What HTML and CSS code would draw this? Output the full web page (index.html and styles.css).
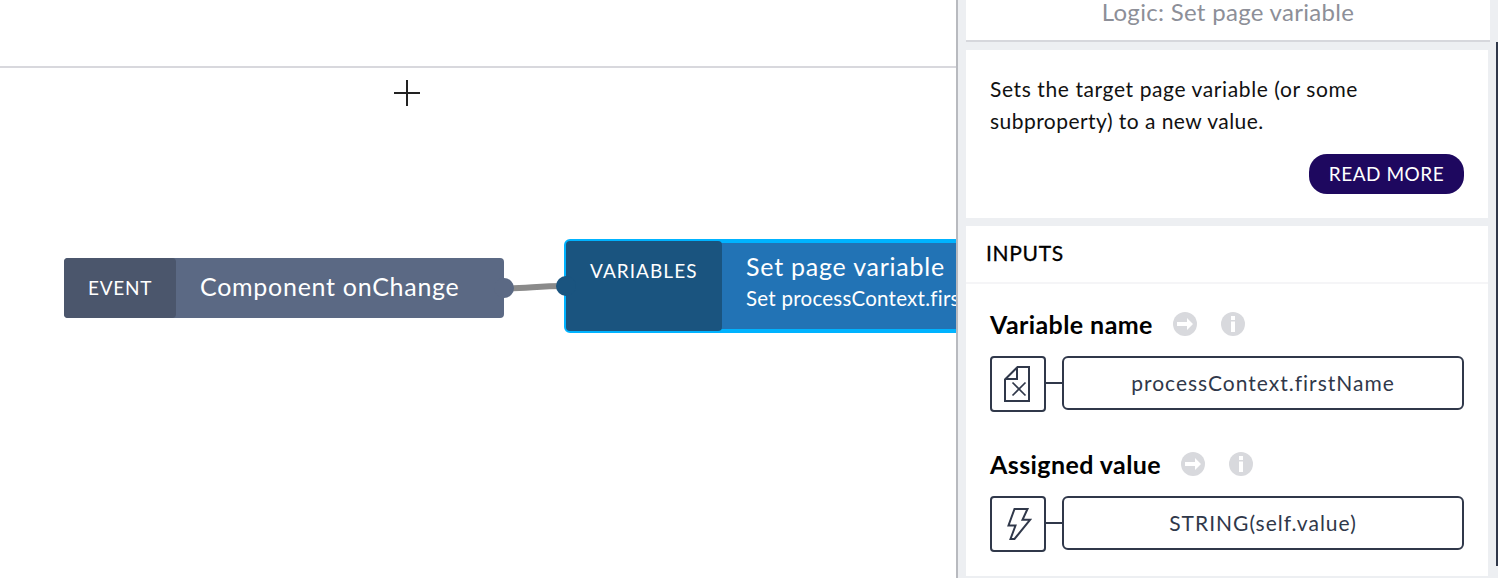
FILE: index.html
```html
<!DOCTYPE html>
<html lang="en">
<head>
<meta charset="utf-8">
<title>Logic editor</title>
<link rel="stylesheet" href="styles.css">
</head>
<body>
<div class="app">
  <main class="canvas">
    <div class="toolbar"></div>
    <svg class="cursor" width="26" height="26" viewBox="0 0 26 26"><path d="M13 0V26M0 13H26"/></svg>
    <svg class="wire" width="64" height="20" viewBox="0 0 64 20"><path d="M4 10.500C26 10.500 36 8 62 8"/></svg>
    <div class="node event">
      <span class="kind"><span class="t-event">EVENT</span></span>
      <span class="title t-comp">Component onChange</span>
      <i class="port port-out"></i>
    </div>
    <div class="node variables">
      <span class="kind"><span class="t-vars">VARIABLES</span></span>
      <span class="info">
        <span class="title t-set">Set page variable</span>
        <span class="sub">Set processContext.firstName</span>
      </span>
      <i class="port port-in"></i>
    </div>
  </main>
  <aside class="panel">
    <header class="panel-head"><span class="t-logic">Logic: Set page variable</span></header>
    <section class="card about">
      <p class="desc"><span class="t-d1">Sets the target page variable (or some</span><br><span class="t-d2">subproperty) to a new value.</span></p>
      <button class="more"><span class="t-more">READ MORE</span></button>
    </section>
    <section class="card inputs">
      <h2 class="inputs-head"><span class="t-inputs">INPUTS</span></h2>
      <div class="field">
        <div class="label"><span>Variable name</span>
          <svg class="hint" width="24" height="24" viewBox="0 0 24 24"><circle cx="12" cy="12" r="12"/><path d="M4 10H14V6L20 12L14 18V14H4Z"/></svg>
          <svg class="hint" width="24" height="24" viewBox="0 0 24 24"><circle cx="12" cy="12" r="12"/><path d="M10 4H14V8H10ZM10 9.500H14V20H10Z"/></svg>
        </div>
        <div class="binding">
          <span class="type"><svg width="28" height="36" viewBox="0 0 28 36"><path d="M13.500 1H25V35H1V13.500ZM13 1.500V13H1.500"/><path class="thin" d="M8.500 16.500L21.500 29.500M21.500 16.500L8.500 29.500"/></svg></span>
          <i class="link"></i>
          <span class="value"><span class="t-pc">processContext.firstName</span></span>
        </div>
      </div>
      <div class="field">
        <div class="label"><span>Assigned value</span>
          <svg class="hint" width="24" height="24" viewBox="0 0 24 24"><circle cx="12" cy="12" r="12"/><path d="M4 10H14V6L20 12L14 18V14H4Z"/></svg>
          <svg class="hint" width="24" height="24" viewBox="0 0 24 24"><circle cx="12" cy="12" r="12"/><path d="M10 4H14V8H10ZM10 9.500H14V20H10Z"/></svg>
        </div>
        <div class="binding">
          <span class="type"><svg class="bolt" width="28" height="36" viewBox="0 0 28 36"><path d="M10.500 3H23.500L18.500 13.800H26L10.500 33H6.500L11.500 19.500H4.500Z"/></svg></span>
          <i class="link"></i>
          <span class="value"><span class="t-str">STRING(self.value)</span></span>
        </div>
      </div>
    </section>
    <i class="scrollbar"></i>
  </aside>
</div>
</body>
</html>
```
FILE: styles.css
```css
* { box-sizing: border-box; }
body { margin: 0; font-family: Lato, sans-serif; background: #fff; }
.app { display: flex; width: 1498px; height: 578px; overflow: hidden; }
.app span { white-space: nowrap; }

.canvas { position: relative; width: 956px; height: 578px; overflow: hidden; flex: none; }
.toolbar { height: 68px; border-bottom: 2px solid #d8d8dd; }
.cursor { position: absolute; left: 394px; top: 80px; stroke: #222; stroke-width: 2; }
.wire { position: absolute; left: 502px; top: 278px; fill: none; stroke: #8a8a8a; stroke-width: 6; }
.node { position: absolute; display: flex; color: #fff; }
.event { left: 64px; top: 258px; width: 440px; height: 60px; background: #5b6984; border-radius: 4px; }
.kind { display: flex; align-items: center; padding-left: 24px; font-size: 19px; border-radius: 4px; }
.event .kind { width: 112px; padding-bottom: 2px; background: #4b566c; }
.title { font-size: 25px; line-height: 30px; font-weight: 400; }
.event .title { padding: 13px 0 0 24px; }
.variables { left: 564px; top: 239px; width: 500px; height: 94px; background: #2273b5; border: solid #00b3ff; border-width: 4px 2px; border-radius: 6px; }
.variables .kind { width: 156px; height: 90px; margin-top: -2px; background: #1a547f; align-items: flex-start; padding-top: 18px; }
.info { display: flex; flex-direction: column; padding: 8px 0 0 24px; }
.sub { font-size: 20.5px; line-height: 34px; letter-spacing: .26px; }
.port { position: absolute; width: 20px; height: 20px; border-radius: 50%; }
.port-out { left: 430px; top: 20px; background: #5b6984; }
.port-in { left: -10px; top: 33px; background: #1a547f; }

.panel { position: relative; width: 542px; height: 578px; padding-left: 8px; border-left: 2px solid #b8babf; background: #edeff2; flex: none; }
.panel-head { width: 524px; height: 42px; border-bottom: 2px solid #d6d7dc; background: #fff; text-align: center; font-size: 24px; line-height: 24px; color: #8d8f98; }
.card { width: 522px; margin-top: 8px; background: #fff; }
.about { height: 168px; padding: 23px 24px 0; display: flex; flex-direction: column; }
.desc { margin: 0; font-size: 21px; line-height: 32px; color: #111; }
.more { align-self: flex-end; width: 155px; height: 40px; margin-top: 17px; padding: 0; border: 0; border-radius: 18px; background: #1e085f; color: #fff; font: 19px/40px Lato, sans-serif; }
.inputs { height: 350px; }
.inputs-head { height: 58px; margin: 0; padding: 11px 20px; border-bottom: 2px solid #f5f5f7; font-size: 21px; line-height: 32px; font-weight: 400; color: #000; -webkit-text-stroke: .3px #000; }
.field { height: 140px; padding: 23px 24px 0; }
.label { display: flex; align-items: center; height: 34px; font-size: 25px; font-weight: 700; letter-spacing: .42px; color: #000; }
.label span { margin-top: -1px; }
.hint { margin-left: 24px; fill: #d8d9dd; }
.label span + .hint { margin-left: 20px; }
.hint path { fill: #fff; }
.binding { display: flex; margin-top: 15px; }
.type { width: 56px; height: 56px; display: flex; align-items: center; justify-content: center; border: 2px solid #30384a; border-radius: 4px; }
.type svg { fill: none; stroke: #30384a; stroke-width: 2; }
.type .thin { stroke-width: 1.7; }
.link { width: 16px; height: 2px; margin-top: 26px; background: #30384a; }
.value { width: 402px; height: 54px; border: 2px solid #30384a; border-radius: 6px; text-align: center; font-size: 21px; line-height: 50px; color: #30384a; }
.scrollbar { position: absolute; left: 538px; top: 42px; width: 2px; height: 524px; background: #30384a; }

.t-event { letter-spacing: .75px; }
.t-vars { letter-spacing: 1.05px; }
.t-comp { letter-spacing: .72px; }
.t-set { letter-spacing: .77px; }
.t-logic { letter-spacing: .3px; }
.t-d1 { letter-spacing: .6px; }
.t-d2 { letter-spacing: .46px; }
.t-more { letter-spacing: .5px; }
.t-inputs { letter-spacing: .7px; }
.t-pc, .t-str { letter-spacing: 1px; }
```
